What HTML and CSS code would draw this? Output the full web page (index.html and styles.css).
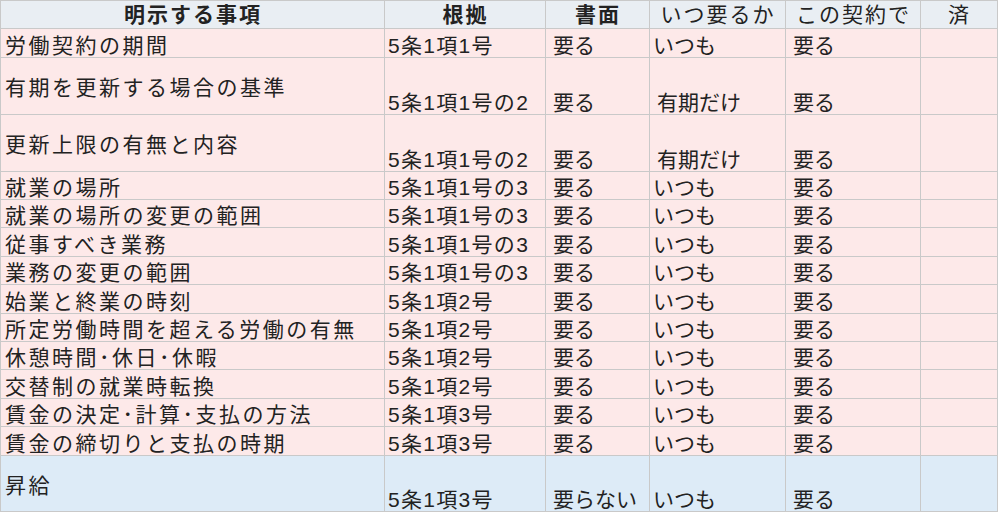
FILE: index.html
```html
<!DOCTYPE html>
<html lang="ja">
<head>
<meta charset="utf-8">
<title>明示する事項</title>
<link rel="stylesheet" href="styles.css">
</head>
<body>
<table class="sheet">
  <colgroup>
    <col class="c1"><col class="c2"><col class="c3"><col class="c4"><col class="c5"><col class="c6">
  </colgroup>
  <thead>
    <tr class="h27">
      <th class="b">明示する事項</th><th class="b">根拠</th><th class="b">書面</th><th>いつ要るか</th><th>この契約で</th><th>済</th>
    </tr>
  </thead>
  <tbody>
    <tr class="pink h28"><td class="item">労働契約の期間</td><td class="law">5条1項1号</td><td class="p">要る</td><td>いつも</td><td class="q">要る</td><td></td></tr>
    <tr class="pink h56"><td class="item mid">有期を更新する場合の基準</td><td class="law">5条1項1号の2</td><td class="p">要る</td><td class="r">有期だけ</td><td class="q">要る</td><td></td></tr>
    <tr class="pink h56"><td class="item mid">更新上限の有無と内容</td><td class="law">5条1項1号の2</td><td class="p">要る</td><td class="r">有期だけ</td><td class="q">要る</td><td></td></tr>
    <tr class="pink h27"><td class="item">就業の場所</td><td class="law">5条1項1号の3</td><td class="p">要る</td><td>いつも</td><td class="q">要る</td><td></td></tr>
    <tr class="pink h27"><td class="item">就業の場所の変更の範囲</td><td class="law">5条1項1号の3</td><td class="p">要る</td><td>いつも</td><td class="q">要る</td><td></td></tr>
    <tr class="pink h28"><td class="item">従事すべき業務</td><td class="law">5条1項1号の3</td><td class="p">要る</td><td>いつも</td><td class="q">要る</td><td></td></tr>
    <tr class="pink h27"><td class="item">業務の変更の範囲</td><td class="law">5条1項1号の3</td><td class="p">要る</td><td>いつも</td><td class="q">要る</td><td></td></tr>
    <tr class="pink h28"><td class="item">始業と終業の時刻</td><td class="law">5条1項2号</td><td class="p">要る</td><td>いつも</td><td class="q">要る</td><td></td></tr>
    <tr class="pink h27"><td class="item">所定労働時間を超える労働の有無</td><td class="law">5条1項2号</td><td class="p">要る</td><td>いつも</td><td class="q">要る</td><td></td></tr>
    <tr class="pink h27"><td class="item">休憩時間･休日･休暇</td><td class="law">5条1項2号</td><td class="p">要る</td><td>いつも</td><td class="q">要る</td><td></td></tr>
    <tr class="pink h28"><td class="item">交替制の就業時転換</td><td class="law">5条1項2号</td><td class="p">要る</td><td>いつも</td><td class="q">要る</td><td></td></tr>
    <tr class="pink h27"><td class="item">賃金の決定･計算･支払の方法</td><td class="law">5条1項3号</td><td class="p">要る</td><td>いつも</td><td class="q">要る</td><td></td></tr>
    <tr class="pink h28"><td class="item">賃金の締切りと支払の時期</td><td class="law">5条1項3号</td><td class="p">要る</td><td>いつも</td><td class="q">要る</td><td></td></tr>
    <tr class="blue h55"><td class="item mid">昇給</td><td class="law">5条1項3号</td><td class="p">要らない</td><td>いつも</td><td class="q">要る</td><td></td></tr>
  </tbody>
</table>
</body>
</html>
```

FILE: styles.css
```css
html, body {
  margin: 0;
  padding: 0;
  background: #ffffff;
}

.sheet {
  table-layout: fixed;
  width: 998px;
  border-collapse: separate;
  border-spacing: 1px;
  background: #c9c9c9;
  font-family: "Liberation Sans", "Noto Sans CJK JP", sans-serif;
  font-size: 21px;
  color: #222222;
}

.c1 { width: 383px; }
.c2 { width: 160px; }
.c3 { width: 103px; }
.c4 { width: 135px; }
.c5 { width: 134px; }
.c6 { width: 76px; }

.sheet th,
.sheet td {
  padding: 0 2px 0 3px;
  line-height: 22px;
  white-space: nowrap;
  overflow: hidden;
  vertical-align: bottom;
}

.sheet th {
  background: #e9eef3;
  font-weight: 400;
  text-align: center;
  letter-spacing: 2px;
  vertical-align: middle;
}

.sheet th.b {
  font-weight: 700;
}

.sheet td {
  text-align: left;
}

.pink td { background: #fde9e9; }
.blue td { background: #ddebf7; }

.h27 { height: 27px; }
.h28 { height: 28px; }
.h56 { height: 56px; }
.h55 { height: 55px; }

.sheet td.item {
  padding-left: 4px;
  letter-spacing: 2.5px;
}

.sheet td.mid {
  vertical-align: middle;
  padding-top: 4px;
}

.sheet td.law {
  letter-spacing: 1.3px;
}

.sheet td.p { padding-left: 7px; }
.sheet td.q { padding-left: 7px; }
.sheet td.r { padding-left: 7px; }
```
